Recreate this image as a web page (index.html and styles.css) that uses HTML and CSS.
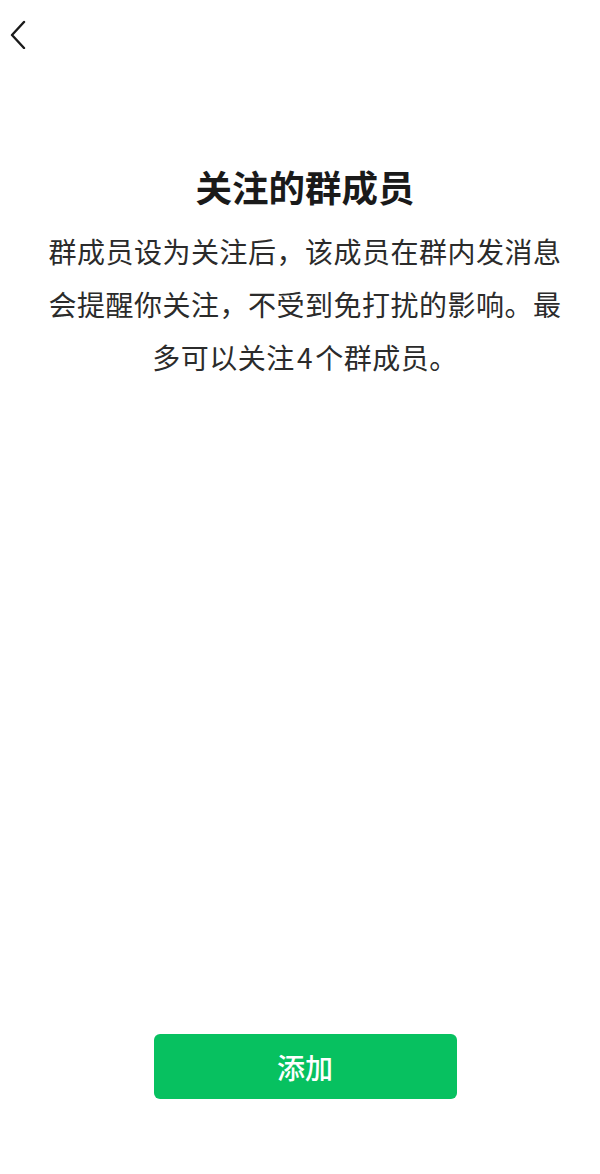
FILE: index.html
```html
<!DOCTYPE html>
<html lang="zh-CN">
<head>
<meta charset="utf-8">
<link rel="stylesheet" href="styles.css">
</head>
<body>
<div class="page">
  <header class="topbar">
    <button class="back" aria-label="返回">
      <svg width="20" height="30" viewBox="0 0 20 30"><path d="M15 3 L3 16 L15 29" fill="none" stroke="#1a1a1a" stroke-width="2.4" stroke-linecap="round" stroke-linejoin="round"/></svg>
    </button>
  </header>
  <main class="content">
    <h1 class="title">关注的群成员</h1>
    <p class="desc">群成员设为关注后，该成员在群内发消息会提醒你关注，不受到免打扰的影响。最多可以关注&#8202;4&#8202;个群成员。</p>
  </main>
  <div class="actions">
    <button class="add">添加</button>
  </div>
</div>
</body>
</html>
```
FILE: styles.css
```css
* { box-sizing: border-box; }
html, body { margin: 0; padding: 0; background: #fff; }
body {
  font-family: "Noto Sans CJK SC", "Noto Sans", sans-serif;
  color: #1a1a1a;
}
.page {
  width: 600px;
  height: 1174px;
  display: flex;
  flex-direction: column;
}
.topbar {
  height: 70px;
  padding: 19px 0 0 9px;
}
.back {
  border: 0;
  background: none;
  padding: 0;
  display: block;
}
.content {
  display: flex;
  flex-direction: column;
  align-items: center;
  padding-left: 10px;
}
.title {
  margin: 93px 0 0;
  font-size: 36.5px;
  line-height: 48px;
  font-weight: 700;
  color: #1a1a1a;
}
.desc {
  margin: 14px 0 0;
  width: 522px;
  font-size: 28px;
  line-height: 53px;
  letter-spacing: 0.5px;
  text-align: center;
  color: #2b2b2b;
}
.actions {
  margin-top: auto;
  padding: 0 0 75px 10px;
  display: flex;
  justify-content: center;
}
.add {
  width: 303px;
  height: 65px;
  border: 0;
  border-radius: 6px;
  background: #07c160;
  color: #fff;
  font-family: "Noto Sans CJK SC", "Noto Sans", sans-serif;
  font-size: 28px;
  font-weight: 500;
  padding: 0;
}
```
